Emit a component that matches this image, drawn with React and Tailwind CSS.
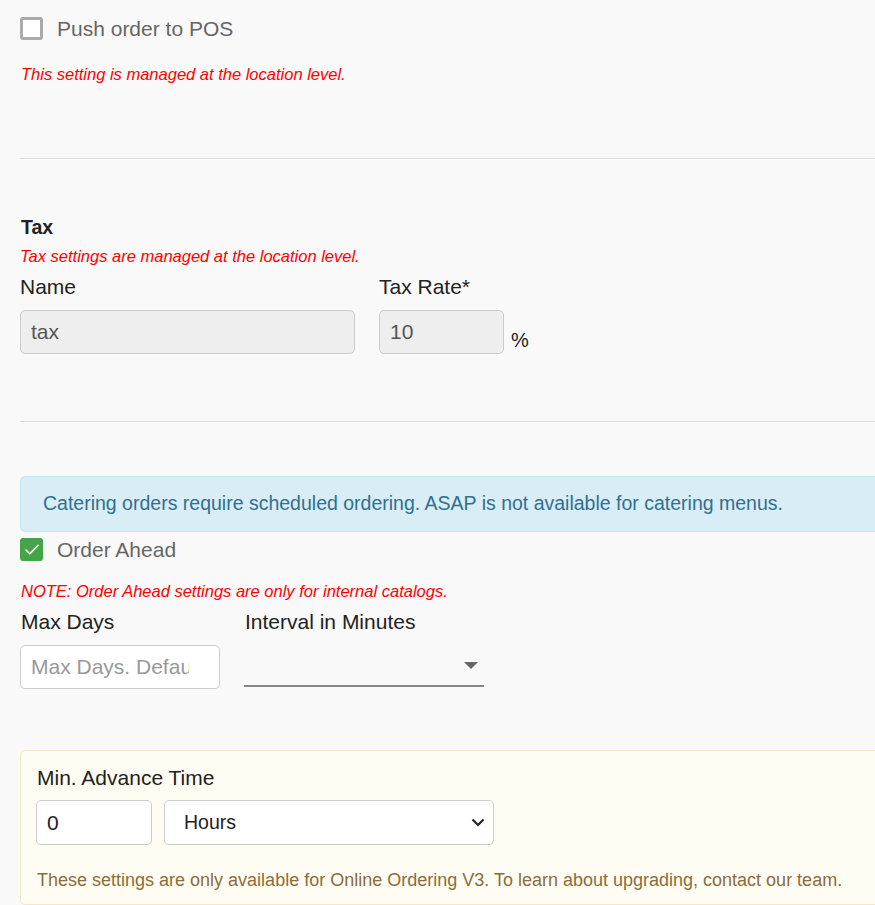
import { Check } from "lucide-react"

const font = { fontFamily: "'Liberation Sans', Arial, sans-serif" }

function Box({ checked, label }) {
  return (
    <label className="flex h-[23px] items-center gap-[14px]">
      {checked ? (
        <span className="grid h-[23px] w-[23px] place-items-center rounded-[3px] bg-[#43a547]">
          <Check className="h-[18px] w-[18px] text-white" strokeWidth={2.2} />
        </span>
      ) : (
        <span className="h-[23px] w-[23px] rounded-[3px] border-[3px] border-[#aaa] bg-white" />
      )}
      <span className="text-[21px] leading-[23px] text-[#666]">{label}</span>
    </label>
  )
}

function Note({ children, className = "" }) {
  return <p className={`text-[16.5px] italic leading-[18px] text-[#f00] ${className}`}>{children}</p>
}

function Rule() {
  return <div className="border-t border-[#ddd] border-b border-b-white" />
}

export default function App() {
  return (
    <div className="min-h-[905px] w-[875px] overflow-hidden bg-[#f9f9f9]" style={font}>
      <div className="w-[920px] pl-5">
        {/* pos */}
        <div className="pt-[17px]">
          <Box label="Push order to POS" />
          <Note className="mt-[25px] pl-px">This setting is managed at the location level.</Note>
        </div>

        <div className="mt-[75px]">
          <Rule />
        </div>

        {/* tax */}
        <div className="mt-[56px]">
          <h3 className="pl-px text-[19.5px] font-bold leading-[22px] text-[#222]">Tax</h3>
          <Note className="mt-[9px]">Tax settings are managed at the location level.</Note>
          <div className="mt-[10px] flex text-[21px] text-[#222]">
            <div className="w-[359px]">
              <div className="leading-[24px]">Name</div>
              <div className="mt-[11px] flex h-[44px] w-[335px] items-center rounded-[5px] border border-[#ccc] bg-[#eee] px-[10px] text-[#555]">
                tax
              </div>
            </div>
            <div>
              <div className="leading-[24px]">Tax Rate*</div>
              <div className="mt-[11px] flex items-end gap-[7px]">
                <div className="flex h-[44px] w-[125px] items-center rounded-[5px] border border-[#ccc] bg-[#eee] px-[10px] text-[#555]">
                  10
                </div>
                <span className="pb-[2px] text-[20px] leading-[24px]">%</span>
              </div>
            </div>
          </div>
        </div>

        <div className="mt-[67px]">
          <Rule />
        </div>

        {/* catering */}
        <div className="mt-[53px] flex h-[56px] items-center rounded-[5px] border border-[#bce8f1] bg-[#d9edf7] px-[22px] text-[19.5px] text-[#31708f]">
          Catering orders require scheduled ordering. ASAP is not available for catering menus.
        </div>
        <div className="mt-[6px]">
          <Box checked label="Order Ahead" />
        </div>
        <Note className="mt-[21px] pl-px">NOTE: Order Ahead settings are only for internal catalogs.</Note>

        <div className="mt-[10px] flex text-[21px] text-[#222]">
          <div className="w-[224px]">
            <div className="pl-px leading-[24px]">Max Days</div>
            <div className="mt-[11px] flex h-[44px] w-[200px] items-center overflow-hidden whitespace-nowrap rounded-[5px] border border-[#ccc] bg-white px-[10px] text-[#999]">
              <span className="block w-[158px] overflow-hidden">Max Days. Default 7</span>
            </div>
          </div>
          <div>
            <div className="pl-px leading-[24px]">Interval in Minutes</div>
            <div className="mt-[11px] flex h-[42px] w-[240px] items-center justify-end border-b-2 border-[#888] pr-[6px]">
              <svg width="14" height="7" viewBox="0 0 14 7">
                <path d="M0 0h14L7 7z" fill="#666" />
              </svg>
            </div>
          </div>
        </div>

        {/* advance time */}
        <div className="mt-[61px] rounded-[5px] border border-[#f7e7c6] bg-[#fffcf3] px-[15px] pb-[14px] pt-[15px]">
          <div className="pl-px text-[21px] leading-[24px] text-[#222]">Min. Advance Time</div>
          <div className="mt-[10px] flex gap-[12px] text-[21px] text-[#222]">
            <div className="flex h-[45px] w-[116px] items-center rounded-[5px] border border-[#ccc] bg-white px-[10px]">0</div>
            <div className="flex h-[45px] w-[330px] items-center justify-between rounded-[5px] border border-[#ccc] bg-white pl-[19px] pr-[8px]">
              <span className="text-[19.5px]">Hours</span>
              <svg width="14" height="9" viewBox="0 0 14 9">
                <path d="M1.5 1.5l5.5 5.5 5.5-5.5" fill="none" stroke="#222" strokeWidth="2.2" />
              </svg>
            </div>
          </div>
          <p className="mt-[25px] whitespace-nowrap pl-px text-[18px] leading-[20px] text-[#8a6d3b]">
            These settings are only available for Online Ordering V3. To learn about upgrading, contact our team.
          </p>
        </div>
      </div>
    </div>
  )
}
